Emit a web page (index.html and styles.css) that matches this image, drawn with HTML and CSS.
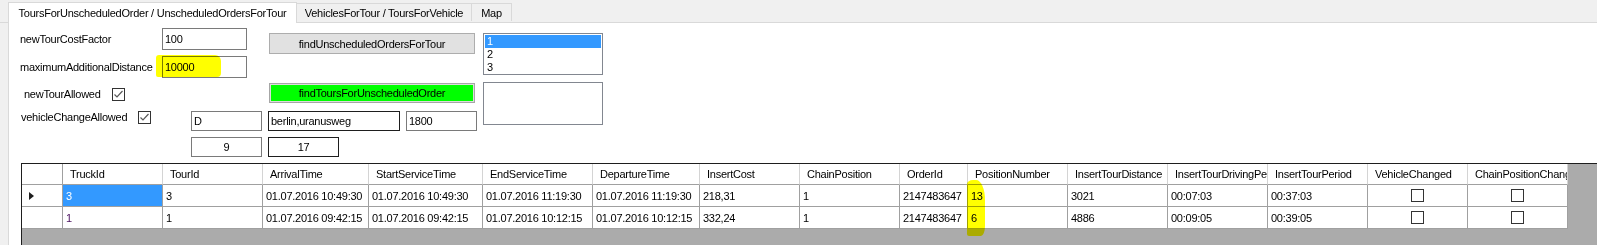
FILE: index.html
```html
<!DOCTYPE html>
<html>
  <head>
    <meta charset="utf-8">
    <title>Tours</title>
    <link rel="stylesheet" href="styles.css">
  </head>
  <body>
    <div class="tabs">
      <div class="tab active">ToursForUnscheduledOrder / UnscheduledOrdersForTour</div>
      <div class="tab second">VehiclesForTour / ToursForVehicle</div>
      <div class="tab third">Map</div>
    </div>

    <div class="page">
      <div class="form">
        <div class="left">
          <div class="params">
            <div class="fields">
              <span class="lbl">newTourCostFactor</span>
              <div class="tb">100</div>
              <span class="lbl">maximumAdditionalDistance</span>
              <div class="tb">10000</div>
            </div>
            <div class="btn">findUnscheduledOrdersForTour</div>
          </div>

          <div class="options">
            <div class="checks">
              <div class="check-row first">
                <span class="lbl">newTourAllowed</span>
                <span class="cb"><svg width="11" height="11" viewBox="0 0 11 11"><polyline points="1.5,5.5 4,8 9.5,2" fill="none" stroke="#5a5a5a" stroke-width="1.2"/></svg></span>
              </div>
              <div class="check-row second">
                <span class="lbl">vehicleChangeAllowed</span>
                <span class="cb"><svg width="11" height="11" viewBox="0 0 11 11"><polyline points="1.5,5.5 4,8 9.5,2" fill="none" stroke="#5a5a5a" stroke-width="1.2"/></svg></span>
              </div>
            </div>
            <div class="actions">
              <div class="btn green">findToursForUnscheduledOrder</div>
              <div class="tb-row">
                <div class="tb short">D</div>
                <div class="tb long focus">berlin,uranusweg</div>
                <div class="tb short">1800</div>
              </div>
              <div class="tb-row">
                <div class="tb short center">9</div>
                <div class="tb short center focus">17</div>
              </div>
            </div>
          </div>
        </div>

        <div class="lists">
          <div class="listbox">
            <div class="item selected">1</div>
            <div class="item">2</div>
            <div class="item">3</div>
          </div>
          <div class="listbox tall"></div>
        </div>

        <span class="marker marker-distance"></span>
      </div>

      <div class="grid">
        <div class="dgv">
          <div class="hd corner"></div>
          <div class="hd">TruckId</div>
          <div class="hd">TourId</div>
          <div class="hd">ArrivalTime</div>
          <div class="hd">StartServiceTime</div>
          <div class="hd">EndServiceTime</div>
          <div class="hd">DepartureTime</div>
          <div class="hd">InsertCost</div>
          <div class="hd">ChainPosition</div>
          <div class="hd">OrderId</div>
          <div class="hd">PositionNumber</div>
          <div class="hd">InsertTourDistance</div>
          <div class="hd">InsertTourDrivingPeriod</div>
          <div class="hd">InsertTourPeriod</div>
          <div class="hd">VehicleChanged</div>
          <div class="hd">ChainPositionChanged</div>

          <div class="rh"><svg width="5" height="8" viewBox="0 0 5 8"><polygon points="0,0 5,4 0,8" fill="#1e1e1e"/></svg></div>
          <div class="cell selected">3</div>
          <div class="cell">3</div>
          <div class="cell">01.07.2016 10:49:30</div>
          <div class="cell">01.07.2016 10:49:30</div>
          <div class="cell">01.07.2016 11:19:30</div>
          <div class="cell">01.07.2016 11:19:30</div>
          <div class="cell">218,31</div>
          <div class="cell">1</div>
          <div class="cell">2147483647</div>
          <div class="cell">13</div>
          <div class="cell">3021</div>
          <div class="cell">00:07:03</div>
          <div class="cell">00:37:03</div>
          <div class="cell check"><span class="gcb"></span></div>
          <div class="cell check"><span class="gcb"></span></div>

          <div class="rh"></div>
          <div class="cell purple">1</div>
          <div class="cell">1</div>
          <div class="cell">01.07.2016 09:42:15</div>
          <div class="cell">01.07.2016 09:42:15</div>
          <div class="cell">01.07.2016 10:12:15</div>
          <div class="cell">01.07.2016 10:12:15</div>
          <div class="cell">332,24</div>
          <div class="cell">1</div>
          <div class="cell">2147483647</div>
          <div class="cell">6</div>
          <div class="cell">4886</div>
          <div class="cell">00:09:05</div>
          <div class="cell">00:39:05</div>
          <div class="cell check"><span class="gcb"></span></div>
          <div class="cell check"><span class="gcb"></span></div>
        </div>

        <span class="marker marker-position"></span>
      </div>
    </div>
  </body>
</html>
```

FILE: styles.css
```css
* {
  box-sizing: border-box;
}

body {
  margin: 0;
  padding: 0;
  background-color: #f0f0f0;
  font-family: 'Liberation Sans', Arial, sans-serif;
  font-size: 11px;
  letter-spacing: -0.25px;
  color: #000;
  overflow: hidden;
}

/* tab strip */

.tabs {
  display: flex;
  align-items: flex-end;
  height: 23px;
  padding-left: 8px;
  border-bottom: 1px solid #d9d9d9;
}

.tab {
  display: flex;
  align-items: center;
  justify-content: center;
  height: 18px;
  margin-bottom: 1px;
  border-top: 1px solid #d9d9d9;
  border-right: 1px solid #d9d9d9;
  white-space: nowrap;
}

.tab.active {
  width: 289px;
  height: 21px;
  margin-bottom: -1px;
  border-left: 1px solid #d9d9d9;
  background-color: #fff;
  padding-bottom: 1px;
}

.tab.second {
  width: 175px;
}

.tab.third {
  width: 40px;
}

/* tab page */

.page {
  margin-left: 8px;
  height: 222px;
  border-left: 1px solid #d9d9d9;
  background-color: #fff;
}

.form {
  position: relative;
  display: flex;
  height: 140px;
  padding-left: 11px;
}

.left {
  width: 463px;
}

.params {
  display: flex;
  padding-top: 5px;
}

.fields {
  display: grid;
  grid-template-columns: 142px 85px;
  grid-auto-rows: 22px;
  row-gap: 6px;
  align-items: center;
}

.lbl {
  white-space: nowrap;
}

.tb {
  display: flex;
  align-items: center;
  height: 22px;
  padding-left: 2px;
  border: 1px solid #7a7a7a;
  background-color: #fff;
  white-space: nowrap;
}

.tb.focus {
  border-color: #1e1e1e;
}

.tb.center {
  justify-content: center;
  padding-left: 0;
}

.btn {
  display: flex;
  align-items: center;
  justify-content: center;
  width: 206px;
  height: 21px;
  margin: 5px 0 0 22px;
  border: 1px solid #adadad;
  background-color: #e1e1e1;
}

.btn.green {
  height: 20px;
  margin: 0 0 0 78px;
  border-color: #a6a6a6;
  background-color: #00ff00;
  box-shadow: inset 0 0 0 1px #dcdcdc;
}

.options {
  display: flex;
  margin-top: 5px;
}

.checks {
  width: 171px;
}

.check-row {
  display: flex;
  align-items: center;
  height: 22px;
}

.check-row.first {
  padding-left: 4px;
}

.check-row.first .lbl {
  width: 88px;
}

.check-row.second {
  margin-top: 1px;
  padding-left: 1px;
}

.check-row.second .lbl {
  width: 117px;
}

.cb {
  display: flex;
  align-items: center;
  justify-content: center;
  width: 13px;
  height: 13px;
  border: 1px solid #333;
  background-color: #fff;
}

.tb-row {
  display: flex;
  gap: 6px;
  margin-top: 8px;
}

.tb-row + .tb-row {
  margin-top: 6px;
}

.tb-row .tb {
  height: 20px;
}

.tb.short {
  width: 71px;
}

.tb.long {
  width: 132px;
}

.lists {
  padding-top: 10px;
}

.listbox {
  width: 120px;
  height: 42px;
  padding: 1px;
  border: 1px solid #828790;
  background-color: #fff;
}

.listbox.tall {
  height: 43px;
  margin-top: 7px;
}

.item {
  height: 13px;
  line-height: 13px;
  padding-left: 2px;
}

.item.selected {
  background-color: #3399ff;
  color: #fff;
}

/* yellow highlighter strokes */

.marker {
  position: absolute;
  background-color: #ffff00;
  mix-blend-mode: multiply;
}

.marker-distance {
  left: 147px;
  top: 32px;
  width: 65px;
  height: 22px;
  border-radius: 3px 6px 4px 2px;
}

.marker-position {
  left: 945px;
  top: 16px;
  width: 18px;
  height: 56px;
  border-radius: 6px 9px 4px 2px / 4px 20px 10px 2px;
}

/* data grid */

.grid {
  position: relative;
  height: 82px;
  margin-left: 12px;
  border-top: 1px solid #1e1e1e;
  border-left: 1px solid #1e1e1e;
  background-color: #ababab;
}

.dgv {
  display: grid;
  grid-template-columns: 41px 100px 100px 106px 114px 110px 107px 100px 100px 68px repeat(6, 100px);
  grid-template-rows: 21px 22px 22px;
  width: 1546px;
}

.dgv > div {
  display: flex;
  align-items: center;
  overflow: hidden;
  white-space: nowrap;
  background-color: #fff;
  border-right: 1px solid #a0a0a0;
  border-bottom: 1px solid #a0a0a0;
}

.dgv .hd {
  padding-left: 7px;
  border-right-color: #d4d4d4;
}

.dgv .hd.corner {
  border-right-color: #a0a0a0;
}

.dgv .rh {
  padding-left: 7px;
}

.dgv .cell {
  padding-left: 3px;
}

.dgv .cell.selected {
  background-color: #3399ff;
  color: #fff;
}

.dgv .cell.purple {
  color: #4a1060;
}

.dgv .cell.check {
  justify-content: center;
  padding-left: 0;
}

.gcb {
  width: 13px;
  height: 13px;
  border: 1px solid #333;
}
```
